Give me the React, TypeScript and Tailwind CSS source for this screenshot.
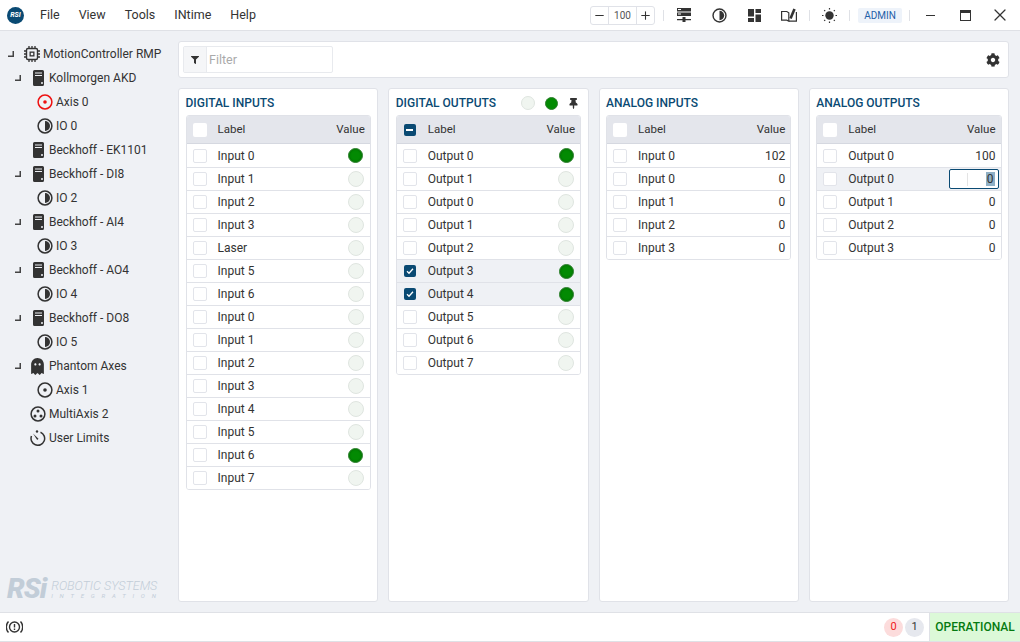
import { FaCog, FaFilter, FaGhost, FaThumbtack } from "react-icons/fa";
import { Minus, Plus, X } from "lucide-react";

const ink = "#333";

function Half({ size = 16 }: { size?: number }) {
  return (
    <svg width={size} height={size} viewBox="0 0 16 16" className="shrink-0">
      <circle cx="8" cy="8" r="6.9" fill="none" stroke={ink} strokeWidth="1.5" />
      <path d="M8 3a5 5 0 0 1 0 10z" fill={ink} />
    </svg>
  );
}

function Axis({ color = ink }: { color?: string }) {
  return (
    <svg width="16" height="16" viewBox="0 0 16 16" className="shrink-0">
      <circle cx="8" cy="8" r="6.9" fill="none" stroke={color} strokeWidth="1.5" />
      <circle cx="8" cy="8" r="1.8" fill={color} />
    </svg>
  );
}

function Tower() {
  return (
    <svg width="11" height="16" viewBox="0 0 11 16" className="shrink-0">
      <path
        fillRule="evenodd"
        d="M1.5 0h8A1.5 1.5 0 0 1 11 1.5v13A1.5 1.5 0 0 1 9.5 16h-8A1.5 1.5 0 0 1 0 14.5v-13A1.5 1.5 0 0 1 1.5 0zM2 2.5v1h7v-1zM2 5v1h7V5zM8 13a1 1 0 1 0 2 0 1 1 0 0 0-2 0z"
        fill={ink}
      />
    </svg>
  );
}

function Chip() {
  return (
    <svg width="16" height="16" viewBox="0 0 16 16" className="shrink-0">
      <rect x="2.5" y="2.5" width="11" height="11" rx="1.5" fill="none" stroke={ink} strokeWidth="1.4" />
      <rect x="5.5" y="5.5" width="5" height="5" fill={ink} />
      <rect x="6.8" y="6.8" width="2.4" height="2.4" fill="#eff1f5" />
      <path d="M5 0v2M8 0v2M11 0v2M5 14v2M8 14v2M11 14v2M0 5h2M0 8h2M0 11h2M14 5h2M14 8h2M14 11h2" stroke={ink} strokeWidth="1.3" />
    </svg>
  );
}

function Multi() {
  return (
    <svg width="16" height="16" viewBox="0 0 16 16" className="shrink-0">
      <circle cx="8" cy="8" r="6.9" fill="none" stroke={ink} strokeWidth="1.5" />
      <circle cx="8" cy="5" r="1.5" fill={ink} />
      <circle cx="5" cy="10" r="1.5" fill={ink} />
      <circle cx="11" cy="10" r="1.5" fill={ink} />
    </svg>
  );
}

function Limits() {
  return (
    <svg width="16" height="16" viewBox="0 0 16 16" className="shrink-0">
      <path d="M10.5 2.2A6.8 6.8 0 1 1 1.5 6" fill="none" stroke={ink} strokeWidth="1.5" />
      <path d="M3 3.5l5.500 5.200-1.300 1.300z" fill={ink} />
      <circle cx="7" cy="1.5" r="1.2" fill={ink} />
    </svg>
  );
}

function Expander() {
  return (
    <svg width="6" height="6" viewBox="0 0 6 6" className="shrink-0">
      <path d="M0 4.5h4.5V0H6v6H0z" fill="#444" />
    </svg>
  );
}

function RackIcon() {
  return (
    <svg width="14" height="14" viewBox="0 0 14 14">
      <path fillRule="evenodd" d="M0 0h14v3.500H0zM1 1v1h3V1zM0 4.500h14V8H0zM1 5.500v1h3v-1zM0 11h5.500V9h3v2H14v1.200H8.500V14h-3v-1.800H0z" fill={ink} />
    </svg>
  );
}

function LayoutIcon() {
  return (
    <svg width="13" height="13" viewBox="0 0 13 13">
      <path d="M0 0h6v7.500H0zM7.500 0H13v4H7.500zM7.500 5.500H13V13H7.500zM0 9h6v4H0z" fill={ink} />
    </svg>
  );
}

function BookIcon() {
  return (
    <svg width="16" height="14" viewBox="0 0 16 14">
      <path d="M.6 3.500h5.200l2 1.300v8.400l-2-1H.6zM7.800 13.200h7.600V4" fill="none" stroke={ink} strokeWidth="1.200" />
      <path d="M9.500 10.500L13.500 1" fill="none" stroke={ink} strokeWidth="2.600" />
    </svg>
  );
}

function SunIcon() {
  return (
    <svg width="15" height="15" viewBox="0 0 15 15">
      <circle cx="7.500" cy="7.500" r="4.200" fill={ink} />
      <path d="M7.500 0v1.500M7.500 13.500V15M0 7.500h1.500M13.500 7.500H15M2.200 2.200l1 1M11.800 11.800l1 1M2.200 12.800l1-1M11.800 3.200l1-1" stroke={ink} strokeWidth="1.200" />
    </svg>
  );
}

function Led({ on }: { on: boolean }) {
  return on ? (
    <span className="block w-[15px] h-[15px] mx-[0.5px] rounded-full bg-[#038a03] border border-[#2f7f2f] shadow-[inset_0_0_2px_#015a01]" />
  ) : (
    <span className="block w-[16px] h-[16px] rounded-full bg-[#f0f5f0] border border-[#dfe5e0]" />
  );
}

function Check({ state }: { state: "off" | "on" | "mixed" }) {
  if (state === "off") {
    return <span className="block w-[14px] h-[14px] rounded-[2px] bg-white border border-[#e2e4ea]" />;
  }
  return (
    <span className="flex items-center justify-center w-[12px] h-[12px] m-px rounded-[2px] bg-[#0a4a73]">
      {state === "on" ? (
        <svg width="8" height="8" viewBox="0 0 8 8">
          <path d="M1 4.300l2 2 4-4.500" fill="none" stroke="white" strokeWidth="1.300" />
        </svg>
      ) : (
        <span className="block w-[7px] h-[1.5px] bg-white" />
      )}
    </span>
  );
}

type TreeRow = { pad: string; exp?: boolean; icon: React.ReactNode; text: string; gap: string };

const treeRows: TreeRow[] = [
  { pad: "pl-[8px]", exp: true, icon: <Chip />, text: "MotionController RMP", gap: "gap-[3px]" },
  { pad: "pl-[15px]", exp: true, icon: <Tower />, text: "Kollmorgen AKD", gap: "gap-[5px]" },
  { pad: "pl-[37px]", icon: <Axis color="#ee1111" />, text: "Axis 0", gap: "gap-[3px]" },
  { pad: "pl-[37px]", icon: <Half />, text: "IO 0", gap: "gap-[3px]" },
  { pad: "pl-[33px]", icon: <Tower />, text: "Beckhoff - EK1101", gap: "gap-[5px]" },
  { pad: "pl-[15px]", exp: true, icon: <Tower />, text: "Beckhoff - DI8", gap: "gap-[5px]" },
  { pad: "pl-[37px]", icon: <Half />, text: "IO 2", gap: "gap-[3px]" },
  { pad: "pl-[15px]", exp: true, icon: <Tower />, text: "Beckhoff - AI4", gap: "gap-[5px]" },
  { pad: "pl-[37px]", icon: <Half />, text: "IO 3", gap: "gap-[3px]" },
  { pad: "pl-[15px]", exp: true, icon: <Tower />, text: "Beckhoff - AO4", gap: "gap-[5px]" },
  { pad: "pl-[37px]", icon: <Half />, text: "IO 4", gap: "gap-[3px]" },
  { pad: "pl-[15px]", exp: true, icon: <Tower />, text: "Beckhoff - DO8", gap: "gap-[5px]" },
  { pad: "pl-[37px]", icon: <Half />, text: "IO 5", gap: "gap-[3px]" },
  { pad: "pl-[15px]", exp: true, icon: <FaGhost size={17} color={ink} className="shrink-0 -ml-[2px]" />, text: "Phantom Axes", gap: "gap-[3px]" },
  { pad: "pl-[37px]", icon: <Axis />, text: "Axis 1", gap: "gap-[3px]" },
  { pad: "pl-[30px]", icon: <Multi />, text: "MultiAxis 2", gap: "gap-[3px]" },
  { pad: "pl-[30px]", icon: <Limits />, text: "User Limits", gap: "gap-[3px]" },
];

type Row = { label: string; value?: string; led?: boolean; checked?: boolean; editing?: boolean };

function IoTable({ rows, head, kind }: { rows: Row[]; head: "off" | "mixed"; kind: "led" | "num" }) {
  return (
    <div className="border border-[#e0e2e8] rounded-[3px] overflow-hidden">
      <div className="flex items-center h-[28px] pt-px bg-[#e4e6ec] pl-[6px] pr-[5px] text-[11.5px] text-[#333] border-b border-[#d5d8e0]">
        <span className="w-[25px] flex">
          {head === "off" ? (
            <span className="block w-[14px] h-[14px] rounded-[2px] bg-white" />
          ) : (
            <Check state="mixed" />
          )}
        </span>
        <span className="flex-1">Label</span>
        <span>Value</span>
      </div>
      {rows.map((r, i) => (
        <div
          key={i}
          className={`flex items-center h-[23px] pl-[6px] pr-[5px] text-[12px] text-[#333] ${i > 0 ? "border-t border-[#e0e2e8]" : ""} ${r.checked || r.editing ? "bg-[#eff1f5]" : "bg-white"}`}
        >
          <span className="w-[25px] flex">
            <Check state={r.checked ? "on" : "off"} />
          </span>
          <span className="flex-1">{r.label}</span>
          {kind === "led" ? (
            <span className="mr-px">
              <Led on={!!r.led} />
            </span>
          ) : r.editing ? (
            <span className="flex items-center justify-end w-[50px] h-[20px] -mr-[3px] pr-[3px] rounded-[2px] bg-white border border-[#0a4a73]">
              <span className="block w-px h-[13px] mr-[18px] bg-[#e4e4e4]" />
              <span className="bg-[#8fb0c6] px-px leading-[14px]">{r.value}</span>
            </span>
          ) : (
            <span>{r.value}</span>
          )}
        </div>
      ))}
    </div>
  );
}

const digitalIn: Row[] = [
  { label: "Input 0", led: true },
  { label: "Input 1" },
  { label: "Input 2" },
  { label: "Input 3" },
  { label: "Laser" },
  { label: "Input 5" },
  { label: "Input 6" },
  { label: "Input 0" },
  { label: "Input 1" },
  { label: "Input 2" },
  { label: "Input 3" },
  { label: "Input 4" },
  { label: "Input 5" },
  { label: "Input 6", led: true },
  { label: "Input 7" },
];

const digitalOut: Row[] = [
  { label: "Output 0", led: true },
  { label: "Output 1" },
  { label: "Output 0" },
  { label: "Output 1" },
  { label: "Output 2" },
  { label: "Output 3", led: true, checked: true },
  { label: "Output 4", led: true, checked: true },
  { label: "Output 5" },
  { label: "Output 6" },
  { label: "Output 7" },
];

const analogIn: Row[] = [
  { label: "Input 0", value: "102" },
  { label: "Input 0", value: "0" },
  { label: "Input 1", value: "0" },
  { label: "Input 2", value: "0" },
  { label: "Input 3", value: "0" },
];

const analogOut: Row[] = [
  { label: "Output 0", value: "100" },
  { label: "Output 0", value: "0", editing: true },
  { label: "Output 1", value: "0" },
  { label: "Output 2", value: "0" },
  { label: "Output 3", value: "0" },
];

function Card({ title, extra, children }: { title: string; extra?: React.ReactNode; children: React.ReactNode }) {
  return (
    <div className="flex-1 min-w-0 bg-white border border-[#e0e2e8] rounded-[3px] pl-[6.5px] pr-[6.5px]">
      <div className="flex items-center justify-between h-[26px] pt-[2px] text-[12px] font-medium text-[#0a4a73] uppercase">
        <span>{title}</span>
        {extra}
      </div>
      {children}
    </div>
  );
}

export default function App() {
  return (
    <div className="flex flex-col w-[1020px] h-[642px] bg-[#eff1f5] font-['Roboto',sans-serif] overflow-hidden">
      <header className="flex items-center h-[31px] shrink-0 bg-white border-b border-[#dfe1e6]">
        <span className="flex items-center justify-center w-[17px] h-[17px] ml-[7px] rounded-full bg-[#0a4a73] text-white text-[7px] font-bold italic">
          RSI
        </span>
        <nav className="flex ml-[16px] gap-[19px] text-[12.5px] text-[#333]">
          <span>File</span>
          <span>View</span>
          <span>Tools</span>
          <span>INtime</span>
          <span>Help</span>
        </nav>
        <div className="ml-auto flex items-center h-full">
          <div className="flex items-center w-[65px] h-[19px] border border-[#e0e2e8] rounded-[3px] text-[10px] text-[#555]">
            <span className="flex items-center justify-center w-[18px] h-full border-r border-[#e0e2e8]">
              <Minus size={13} color={ink} strokeWidth={2} />
            </span>
            <span className="flex-1 text-center">100</span>
            <span className="flex items-center justify-center w-[18px] h-full border-l border-[#e0e2e8]">
              <Plus size={13} color={ink} strokeWidth={2} />
            </span>
          </div>
          <span className="w-px h-[11px] bg-[#dfe1e6] ml-[8px]" />
          <span className="flex justify-center w-[40px]"><RackIcon /></span>
          <span className="flex justify-center w-[30px]"><Half size={15} /></span>
          <span className="flex justify-center w-[40px]"><LayoutIcon /></span>
          <span className="flex justify-center w-[30px]"><BookIcon /></span>
          <span className="w-px h-[11px] bg-[#dfe1e6] ml-[5px]" />
          <span className="flex justify-center w-[39px]"><SunIcon /></span>
          <span className="w-px h-[11px] bg-[#dfe1e6]" />
          <span className="ml-[8px] w-[44px] text-center h-[15px] leading-[15px] rounded-[2px] bg-[#eef3fa] text-[#1f5fa8] text-[10px]">ADMIN</span>
          <span className="w-px h-[11px] bg-[#dfe1e6] ml-[7px]" />
          <span className="flex justify-center w-[41px] pt-px"><span className="block w-[9px] h-[1.5px] bg-[#333]" /></span>
          <span className="flex justify-center w-[29px]"><span className="block w-[11px] h-[11px] border border-[#333] border-t-[3px]" /></span>
          <span className="flex justify-center w-[40px]"><X size={20} color={ink} strokeWidth={1.5} /></span>
        </div>
      </header>

      <div className="flex flex-1 min-h-0">
        <aside className="flex flex-col w-[178px] shrink-0 pt-[11px] pb-[10px]">
          {treeRows.map((r, i) => (
            <div key={i} className={`flex items-center h-[24px] text-[12px] text-[#333] ${r.pad} ${r.gap}`}>
              {r.exp && <span className="flex w-[13px] shrink-0"><Expander /></span>}
              {r.icon}
              <span className="whitespace-nowrap">{r.text}</span>
            </div>
          ))}
          <div className="mt-auto flex items-center pl-[7px] text-[#c2cdd8] select-none">
            <span className="text-[28px] leading-[26px] font-black italic tracking-[-1px]">RSi</span>
            <span className="flex flex-col ml-[5px] italic">
              <span className="text-[12.5px] leading-[12px] font-light whitespace-nowrap">ROBOTIC SYSTEMS</span>
              <span className="text-[6px] leading-[7px] tracking-[6.8px] whitespace-nowrap">INTEGRATION</span>
            </span>
          </div>
        </aside>

        <main className="flex flex-col flex-1 min-w-0 pt-[10px] pb-[10px] pr-[11px] gap-[10px]">
          <div className="flex items-center justify-between h-[37px] shrink-0 bg-white border border-[#e0e2e8] rounded-[3px] pl-[4px] pr-[8px]">
            <div className="flex items-center w-[150px] h-[27px] border border-[#e8eaee] rounded-[2px]">
              <span className="flex items-center justify-center w-[23px] h-full bg-[#f5f6f8] border-r border-[#e8eaee]">
                <FaFilter size={8} color={ink} />
              </span>
              <span className="ml-[2px] mt-px text-[12.5px] text-[#aaa]">Filter</span>
            </div>
            <FaCog size={14} color={ink} className="mt-px" />
          </div>
          <div className="flex flex-1 min-h-0 gap-[10px]">
            <Card title="Digital Inputs">
              <IoTable rows={digitalIn} head="off" kind="led" />
            </Card>
            <Card
              title="Digital Outputs"
              extra={
                <span className="flex items-center gap-[10px] mr-[2px]">
                  <span className="block w-[14px] h-[14px] rounded-full bg-[#f0f5f0] border border-[#dfe5e0]" />
                  <span className="block w-[13px] h-[13px] rounded-full bg-[#038a03] border border-[#2f7f2f]" />
                  <FaThumbtack size={11} color={ink} />
                </span>
              }
            >
              <IoTable rows={digitalOut} head="mixed" kind="led" />
            </Card>
            <Card title="Analog Inputs">
              <IoTable rows={analogIn} head="off" kind="num" />
            </Card>
            <Card title="Analog Outputs">
              <IoTable rows={analogOut} head="off" kind="num" />
            </Card>
          </div>
        </main>
      </div>

      <footer className="flex items-center h-[30px] shrink-0 bg-white border-y border-[#dfe1e6]">
        <svg width="17" height="14" viewBox="0 0 17 14" className="ml-[6px]">
          <circle cx="8.500" cy="7" r="5" fill="none" stroke={ink} strokeWidth="1.400" />
          <path d="M8.500 4v3.500M8.500 8.500V10" stroke={ink} strokeWidth="1.400" />
          <path d="M2.500 1.500a8 8 0 0 0 0 11M14.500 1.500a8 8 0 0 1 0 11" fill="none" stroke={ink} strokeWidth="1.400" />
        </svg>
        <div className="ml-auto flex items-center h-full">
          <span className="flex items-center justify-center w-[19px] h-[19px] rounded-full bg-[#fcdcdc] text-[#f02020] text-[11px]">0</span>
          <span className="flex items-center justify-center w-[19px] h-[19px] ml-[2px] rounded-full bg-[#e6e8ee] text-[#333] text-[11px]">1</span>
          <span className="flex items-center justify-center w-[91px] h-full ml-[5px] bg-[#dcf9d8] text-[#047a10] text-[12px] font-medium border-l border-[#dfe1e6]">OPERATIONAL</span>
        </div>
      </footer>
    </div>
  );
}
